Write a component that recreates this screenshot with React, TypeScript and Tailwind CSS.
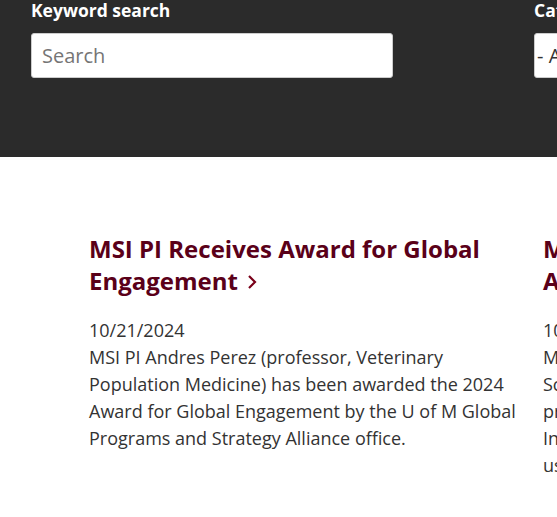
const cards = [
  {
    title: 'MSI PI Receives Award for Global Engagement',
    date: '10/21/2024',
    body: 'MSI PI Andres Perez (professor, Veterinary Population Medicine) has been awarded the 2024 Award for Global Engagement by the U of M Global Programs and Strategy Alliance office.',
  },
  {
    title: 'MSI Research Computing Expands Access to GPUs',
    date: '10/14/2024',
    body: 'MSI researchers in the College of Biological Sciences have developed new computational protein structure models for the university. Investigators across the Twin Cities campus are using these models in their work.',
  },
];

export default function App() {
  return (
    <div className="w-[557px] h-[517px] overflow-hidden bg-white font-['Open_Sans',sans-serif]">
      <div className="bg-[#2b2b2b] h-[157px] pl-[31px] flex gap-[141px]">
        <div className="flex flex-col w-[362px] shrink-0">
          <label className="text-white font-bold text-[17.5px] leading-[22px] -mt-[1px]">Keyword search</label>
          <input
            className="mt-[12px] h-[45px] w-full bg-white rounded-[3px] border border-[#ccc] px-[10px] text-[20px] text-[#333] placeholder:text-[#757575] outline-none"
            placeholder="Search"
          />
        </div>
        <div className="flex flex-col w-[200px] shrink-0">
          <label className="text-white font-bold text-[17.5px] leading-[22px] -mt-[1px]">Category</label>
          <div className="mt-[12px] h-[45px] w-full bg-white rounded-[3px] border border-[#ccc] px-[2px] text-[20px] text-[#333] flex items-center">
            - Any -
          </div>
        </div>
      </div>
      <div className="pl-[89px] pt-[76px] flex gap-[26px]">
        {cards.map((c) => (
          <div key={c.title} className="w-[428px] shrink-0">
            <h3 className="text-[24px] leading-[32px] font-bold text-[#5a0019]">
              {c.title}
              <svg className="inline-block ml-[9px] -mt-[3px] align-middle" width="10" height="16" viewBox="0 0 10 16">
                <path d="M2 2l6 6-6 6" fill="none" stroke="#7a0019" strokeWidth="2.2" />
              </svg>
            </h3>
            <div className="mt-[20px] text-[18px] leading-[27px] text-[#333]">{c.date}</div>
            <p className="text-[18px] leading-[27px] text-[#333]">{c.body}</p>
          </div>
        ))}
      </div>
    </div>
  );
}
